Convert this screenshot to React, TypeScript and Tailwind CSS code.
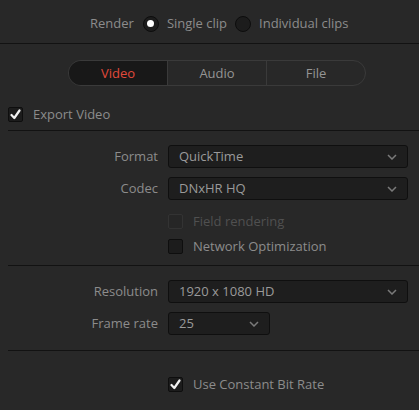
import React from "react";

const font = { fontFamily: '"Open Sans", "Noto Sans", sans-serif' };

function Chevron() {
  return (
    <svg width="10" height="6" viewBox="0 0 10 6" className="shrink-0">
      <path d="M1 1 L5 5 L9 1" fill="none" stroke="#7a7a7a" strokeWidth="1.5" />
    </svg>
  );
}

function Check() {
  return (
    <svg width="11" height="11" viewBox="0 0 11 11">
      <path d="M1.5 6 L4.3 9 L9.5 1.5" fill="none" stroke="#f2f2f2" strokeWidth="2.2" strokeLinecap="round" strokeLinejoin="round" />
    </svg>
  );
}

function Checkbox({ checked, disabled, label }: { checked?: boolean; disabled?: boolean; label: string }) {
  return (
    <div className="flex items-center gap-[10px]">
      <div
        className={
          disabled
            ? "flex h-[15px] w-[15px] items-center justify-center rounded-[2px] border border-[#333333] bg-[#262626]"
            : "flex h-[15px] w-[15px] items-center justify-center rounded-[2px] border border-[#0e0e0e] bg-[#1c1c1c]"
        }
      >
        {checked && <Check />}
      </div>
      <span className={disabled ? "text-[#505050]" : "text-[#8c8c8c]"}>{label}</span>
    </div>
  );
}

function Select({ value, width }: { value: string; width: string }) {
  return (
    <div className={`flex h-[23px] items-center justify-between rounded-[3px] border border-[#0f0f0f] bg-[#1e1e1e] pl-[10px] pr-[10px] ${width}`}>
      <span className="text-[#9a9a9a]">{value}</span>
      <Chevron />
    </div>
  );
}

function Row({ label, children }: { label: string; children: React.ReactNode }) {
  return (
    <div className="flex items-center">
      <div className="w-[158px] text-right text-[#8c8c8c]">{label}</div>
      <div className="ml-[10px]">{children}</div>
    </div>
  );
}

function Radio({ on }: { on?: boolean }) {
  return (
    <div className="flex h-[16px] w-[16px] items-center justify-center rounded-full border border-[#0d0d0d] bg-[#1c1c1c]">
      {on && <div className="h-[7px] w-[7px] rounded-full bg-white" />}
    </div>
  );
}

export default function App() {
  return (
    <div className="h-[410px] w-[419px] overflow-hidden bg-[#282828] text-[13px] leading-none" style={font}>
      <div className="flex h-[43px] items-center pl-[90px] pt-[4px]">
        <span className="text-[#8c8c8c]">Render</span>
        <div className="ml-[9px]"><Radio on /></div>
        <span className="ml-[8px] text-[#8c8c8c]">Single clip</span>
        <div className="ml-[8px]"><Radio /></div>
        <span className="ml-[8px] text-[#8c8c8c]">Individual clips</span>
      </div>
      <div className="h-px bg-[#121212]" />

      <div className="flex justify-center pt-[16px] pl-[15px]">
        <div className="flex h-[26px] w-[298px] overflow-hidden rounded-full border border-[#3a3a3a]">
          <div className="flex flex-1 items-center justify-center bg-[#181818] text-[#e0493b]">Video</div>
          <div className="flex flex-1 items-center justify-center border-l border-[#3a3a3a] text-[#959595]">Audio</div>
          <div className="flex flex-1 items-center justify-center border-l border-[#3a3a3a] text-[#959595]">File</div>
        </div>
      </div>

      <div className="mt-[21px] pl-[8px]">
        <Checkbox checked label="Export Video" />
      </div>
      <div className="ml-[8px] mt-[8px] h-px bg-[#121212]" />

      <div className="mt-[14px] flex flex-col gap-[9px]">
        <Row label="Format"><Select value="QuickTime" width="w-[240px]" /></Row>
        <Row label="Codec"><Select value="DNxHR HQ" width="w-[240px]" /></Row>
      </div>
      <div className="ml-[168px] mt-[14px] flex flex-col gap-[10px]">
        <Checkbox disabled label="Field rendering" />
        <Checkbox label="Network Optimization" />
      </div>
      <div className="ml-[8px] mt-[11px] h-px bg-[#121212]" />

      <div className="mt-[14px] flex flex-col gap-[9px]">
        <Row label="Resolution"><Select value="1920 x 1080 HD" width="w-[240px]" /></Row>
        <Row label="Frame rate"><Select value="25" width="w-[102px]" /></Row>
      </div>
      <div className="ml-[8px] mt-[15px] h-px bg-[#121212]" />

      <div className="ml-[168px] mt-[26px]">
        <Checkbox checked label="Use Constant Bit Rate" />
      </div>
    </div>
  );
}
